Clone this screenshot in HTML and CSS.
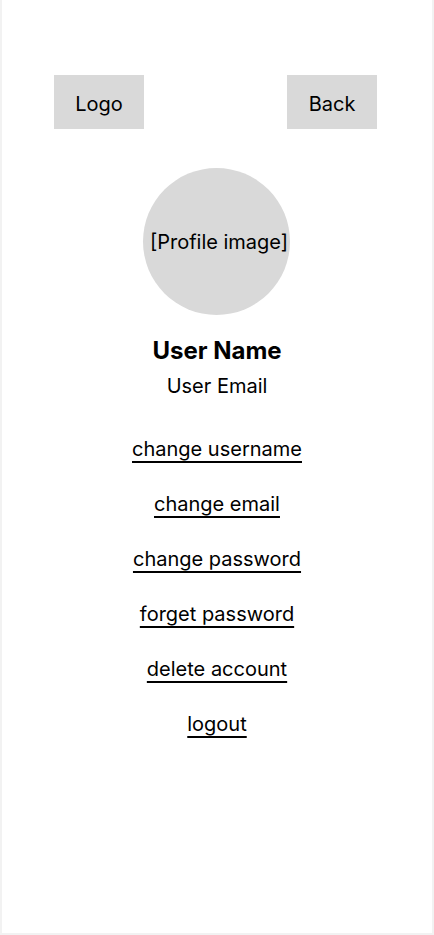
FILE: index.html
```html
<!DOCTYPE html>
<html lang="en">
<head>
<meta charset="utf-8">
<title>Profile</title>
<link rel="stylesheet" href="styles.css">
</head>
<body>
<div class="screen">
  <header class="top-bar">
    <div class="box">Logo</div>
    <div class="box">Back</div>
  </header>
  <main class="profile">
    <div class="avatar">[Profile image]</div>
    <h1 class="user-name">User Name</h1>
    <p class="user-email">User Email</p>
    <nav class="actions">
      <a href="#">change username</a>
      <a href="#">change email</a>
      <a href="#">change password</a>
      <a href="#">forget password</a>
      <a href="#">delete account</a>
      <a href="#">logout</a>
    </nav>
  </main>
</div>
</body>
</html>
```
FILE: styles.css
```css
* { box-sizing: border-box; }
html, body { margin: 0; padding: 0; background: #fff; }
body {
  font-family: Inter, "Noto Sans", sans-serif;
  color: #000;
}
.screen {
  width: 434px;
  height: 935px;
  border: 2px solid #f2f2f2;
  border-top: none;
  background: #fff;
}
.top-bar {
  display: flex;
  justify-content: space-between;
  padding: 75px 55px 0 52px;
}
.box {
  width: 90px;
  height: 54px;
  background: #d9d9d9;
  display: flex;
  align-items: center;
  justify-content: center;
  font-size: 20px;
  padding-top: 4px;
}
.profile {
  display: flex;
  flex-direction: column;
  align-items: center;
  padding-top: 39px;
}
.avatar {
  width: 147px;
  height: 147px;
  border-radius: 50%;
  background: #d9d9d9;
  display: flex;
  align-items: center;
  justify-content: center;
  font-size: 20px;
  margin-left: -1px;
  padding-left: 5px;
  white-space: nowrap;
}
.user-name {
  margin: 21px 0 0;
  font-size: 24px;
  font-weight: 700;
  line-height: 29px;
}
.user-email {
  margin: 9px 0 0;
  font-size: 20px;
  line-height: 24px;
}
.actions {
  display: flex;
  flex-direction: column;
  align-items: center;
  gap: 31px;
  margin-top: 39px;
}
.actions a {
  color: #000;
  font-size: 20px;
  line-height: 24px;
  text-decoration: underline;
  text-decoration-thickness: 1.5px;
  text-underline-offset: 5px;
}
```
